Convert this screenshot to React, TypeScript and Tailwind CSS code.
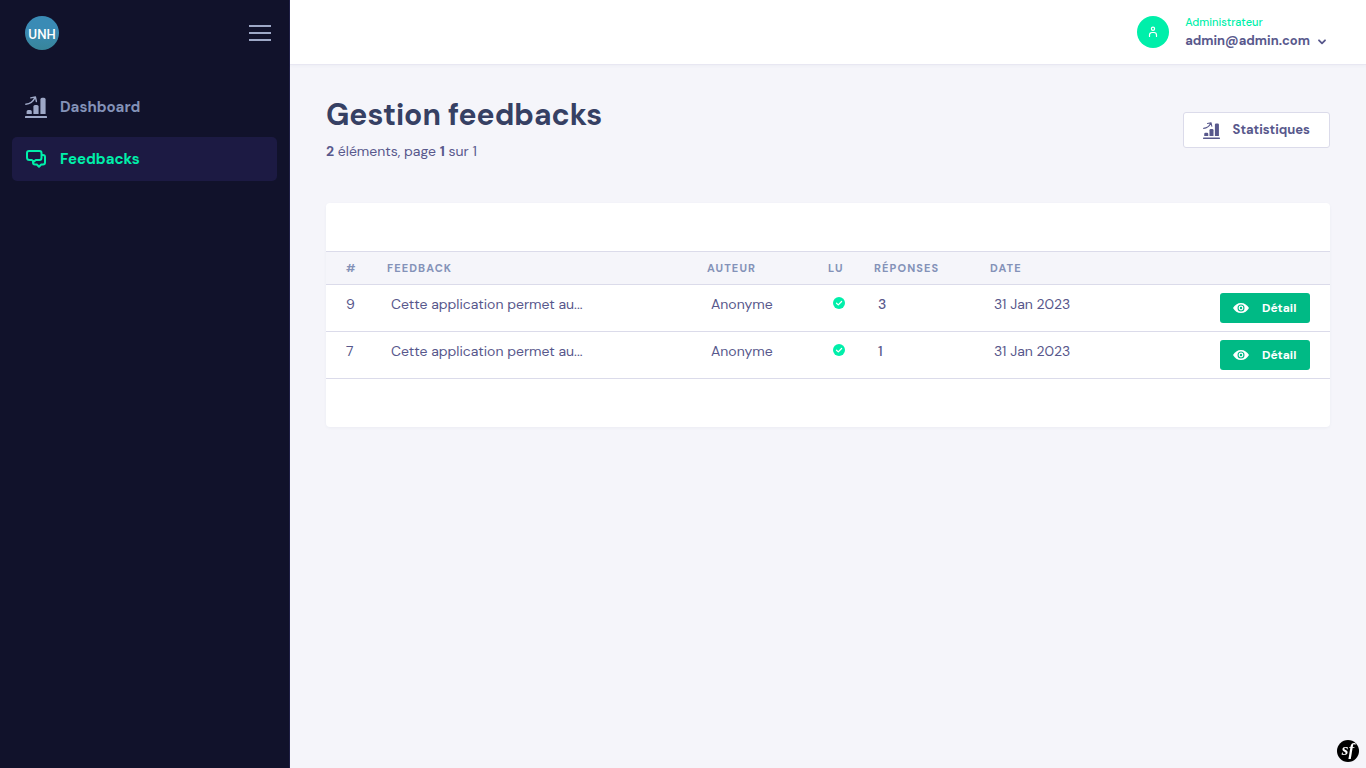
import React from "react";

type IconProps = { className?: string };

function GrowthIcon({ className }: IconProps) {
  return (
    <svg viewBox="0 0 22 22" className={className} fill="currentColor" aria-hidden="true">
      <rect x="0" y="20" width="22" height="2" rx="0.6" />
      <path d="M1.6 18v-2.4A1.6 1.6 0 0 1 3.2 14h2a1.6 1.6 0 0 1 1.6 1.6V18z" />
      <path d="M8.4 18v-7.4A1.6 1.6 0 0 1 10 9h2a1.6 1.6 0 0 1 1.6 1.6V18z" />
      <path d="M15.4 18V3.4A1.6 1.6 0 0 1 17 1.8h2a1.6 1.6 0 0 1 1.6 1.6V18z" />
      <path
        d="M.8 8.2C4.6 7.9 8 5.8 10 1.6M5.8 1.9 10.4.9l1 4.6"
        fill="none"
        stroke="currentColor"
        strokeWidth="1.4"
        strokeLinecap="round"
        strokeLinejoin="round"
      />
    </svg>
  );
}

function ChatIcon({ className }: IconProps) {
  return (
    <svg
      viewBox="0 0 22 22"
      className={className}
      fill="none"
      stroke="currentColor"
      strokeWidth="2"
      strokeLinecap="round"
      strokeLinejoin="round"
      aria-hidden="true"
    >
      <path d="M4 3h10.500A2 2 0 0 1 16.500 5v5a2 2 0 0 1-2 2H10.800L8.800 13.600 6.800 12H4.500A2.500 2.500 0 0 1 2 9.500V5A2 2 0 0 1 4 3z" />
      <path d="M17 7h1a2 2 0 0 1 2 2v5.500a2 2 0 0 1-2 2h-1.800L14 18.700 11.800 16.500H10a2 2 0 0 1-2-2v-.8" />
    </svg>
  );
}

function UserIcon({ className }: IconProps) {
  return (
    <svg viewBox="0 0 12 12" className={className} fill="none" stroke="currentColor" strokeWidth="1.200" strokeLinecap="round" aria-hidden="true">
      <circle cx="6" cy="2.800" r="1.600" />
      <path d="M2.500 10.500V9a2.500 2.500 0 0 1 2.500-2.500h2A2.500 2.500 0 0 1 9.500 9v1.500" />
    </svg>
  );
}

function EyeIcon({ className }: IconProps) {
  return (
    <svg viewBox="0 0 16 12" className={className} aria-hidden="true">
      <path
        fill="currentColor"
        fillRule="evenodd"
        d="M8 1C4.600 1 1.700 3 0 6c1.700 3 4.600 5 8 5s6.300-2 8-5c-1.700-3-4.600-5-8-5zm0 1.500a3.500 3.500 0 1 1 0 7 3.500 3.500 0 0 1 0-7z"
      />
      <circle cx="8" cy="6" r="1.800" fill="none" stroke="currentColor" strokeWidth="1.200" />
    </svg>
  );
}

function CheckCircle({ className }: IconProps) {
  return (
    <svg viewBox="0 0 12 12" className={className} role="img" aria-label="Lu">
      <circle cx="6" cy="6" r="6" fill="#00efaa" />
      <path d="M3.500 6.200 5.300 7.900 8.600 4.500" fill="none" stroke="#fff" strokeWidth="1.200" strokeLinecap="round" strokeLinejoin="round" />
    </svg>
  );
}

function Logo() {
  return (
    <svg viewBox="0 0 34 34" className="size-[34px]" role="img" aria-label="UNH">
      <defs>
        <linearGradient id="logo-fill" x1="0" y1="0" x2="0" y2="1">
          <stop offset="0.4" stopColor="#3a8bb5" />
          <stop offset="1" stopColor="#38859a" />
        </linearGradient>
      </defs>
      <circle cx="17" cy="17" r="17" fill="url(#logo-fill)" />
      <text x="17" y="23" textAnchor="middle" fill="#fff" className="font-['DM_Sans',sans-serif] text-[13px] font-semibold">
        UNH
      </text>
    </svg>
  );
}

const feedbacks = [
  { id: 9, text: "Cette application permet au...", author: "Anonyme", replies: 3, date: "31 Jan 2023" },
  { id: 7, text: "Cette application permet au...", author: "Anonyme", replies: 1, date: "31 Jan 2023" },
];

function Sidebar() {
  return (
    <aside className="w-[290px] shrink-0 border-r border-[#1f1f45] bg-[#11122b]">
      <div className="flex h-[65px] items-center justify-between pr-[18px] pl-6">
        <a href="#" className="block pl-px">
          <Logo />
        </a>
        <button type="button" aria-label="Menu" className="flex w-[22px] flex-col gap-[5px] text-[#9ea8c7]">
          <span className="h-[2px] w-full bg-current" />
          <span className="h-[2px] w-full bg-current" />
          <span className="h-[2px] w-full bg-current" />
        </button>
      </div>
      <nav className="flex flex-col gap-2 px-3 pt-5 text-[15px] font-bold">
        <a href="#" className="flex h-11 items-center gap-[13px] rounded-[5px] pl-[13px] text-[#8492b8]">
          <GrowthIcon className="size-[22px] text-[#9ea8c7]" />
          Dashboard
        </a>
        <a href="#" className="flex h-11 items-center gap-[13px] rounded-[5px] bg-[#1c1a43] pl-[13px] text-[#00efaa]">
          <ChatIcon className="size-[22px]" />
          Feedbacks
        </a>
      </nav>
    </aside>
  );
}

function TopBar() {
  return (
    <header className="flex h-[65px] items-center justify-end border-b border-[#e8e7f2] bg-white pr-10 shadow-[0_1px_3px_rgba(82,100,132,0.05)]">
      <button type="button" className="flex items-center gap-4 text-left">
        <span className="flex size-8 items-center justify-center rounded-full bg-[#00efaa] text-white">
          <UserIcon className="size-3" />
        </span>
        <span className="flex flex-col">
          <span className="text-[11px] leading-[18px] font-medium text-[#00efaa]">Administrateur</span>
          <span className="flex items-center gap-2 text-[13px] leading-5 font-bold text-[#58588c]">
            admin@admin.com
            <svg viewBox="0 0 8 6" className="mt-px h-[6px] w-2" fill="none" stroke="currentColor" strokeWidth="1.800" strokeLinecap="round" strokeLinejoin="round" aria-hidden="true">
              <path d="M1 1.300 4 4.300 7 1.300" />
            </svg>
          </span>
        </span>
      </button>
    </header>
  );
}

function FeedbackTable() {
  return (
    <section className="mt-10 rounded bg-white py-12 shadow-[0_1px_3px_rgba(82,100,132,0.06)]">
      <table className="w-full table-fixed border-separate border-spacing-0 text-left text-[#58588c]">
        <colgroup>
          <col className="w-[57px]" />
          <col className="w-[320px]" />
          <col className="w-[121px]" />
          <col className="w-[46px]" />
          <col className="w-[116px]" />
          <col />
          <col className="w-[110px]" />
        </colgroup>
        <thead className="bg-[#f5f5fa] text-[11px] leading-4 tracking-widest text-[#8492b8] uppercase [&_th]:border-y [&_th]:border-[#dbdbea] [&_th]:py-2 [&_th]:font-bold">
          <tr>
            <th scope="col" className="pl-5">#</th>
            <th scope="col" className="pl-1">Feedback</th>
            <th scope="col" className="pl-1">Auteur</th>
            <th scope="col" className="pl-1">Lu</th>
            <th scope="col" className="pl-1">Réponses</th>
            <th scope="col" className="pl-1">Date</th>
            <th scope="col" aria-label="Actions" />
          </tr>
        </thead>
        <tbody className="text-[14px] leading-[22px] [&_td]:border-b [&_td]:border-[#dbdbea] [&_td]:py-2 [&_td]:align-top">
          {feedbacks.map((f) => (
            <tr key={f.id}>
              <td className="pl-5">{f.id}</td>
              <td className="pl-2">{f.text}</td>
              <td className="pl-2">{f.author}</td>
              <td className="pl-[9px]">
                <CheckCircle className="mt-1 size-3" />
              </td>
              <td className="pl-2 font-medium">{f.replies}</td>
              <td className="pl-2">{f.date}</td>
              <td className="pr-5">
                <a href="#" className="flex h-[30px] items-center gap-[13px] rounded-[3px] bg-[#00ba85] pl-[13px] text-[12px] font-bold text-white">
                  <EyeIcon className="h-3 w-4" />
                  Détail
                </a>
              </td>
            </tr>
          ))}
        </tbody>
      </table>
    </section>
  );
}

export default function App() {
  return (
    <div className="flex min-h-screen bg-[#f5f5fa] font-['DM_Sans',Inter,sans-serif]">
      <Sidebar />
      <div className="min-w-0 flex-1">
        <TopBar />
        <main className="px-9 pt-7">
          <div className="flex items-end justify-between">
            <div>
              <h1 className="pt-px text-[30px] leading-[42px] font-bold text-[#364063]">Gestion feedbacks</h1>
              <p className="mt-[3px] text-[14px] leading-6 text-[#58588c]">
                <b className="font-bold">2</b> éléments, page <b className="font-bold">1</b> sur 1
              </p>
            </div>
            <a href="#" className="mb-[15px] flex h-9 items-center gap-[13px] rounded-[3px] border border-[#dbdbea] bg-white px-[19px] text-[13px] font-bold text-[#58588c]">
              <GrowthIcon className="size-[17px]" />
              Statistiques
            </a>
          </div>
          <FeedbackTable />
        </main>
      </div>
      <button type="button" aria-label="Symfony" className="fixed right-[7px] bottom-[6px] flex size-[22px] items-center justify-center rounded-full bg-black pb-1 font-['Liberation_Serif',serif] text-[17px] leading-none font-bold text-white italic">
        sf
      </button>
    </div>
  );
}
